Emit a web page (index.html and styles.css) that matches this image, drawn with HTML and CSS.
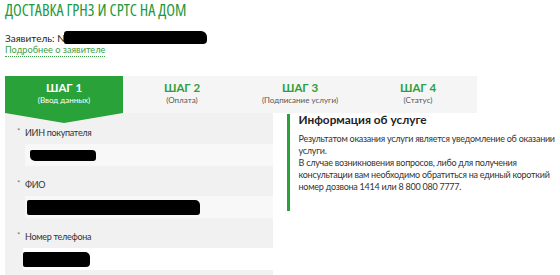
FILE: index.html
```html
<!DOCTYPE html>
<html lang="ru">
<head>
<meta charset="utf-8">
<title>Доставка ГРНЗ и СРТС на дом</title>
<link rel="stylesheet" href="styles.css">
</head>
<body>
<div class="page">
  <h1 class="title">ДОСТАВКА ГРНЗ И СРТС НА ДОМ</h1>
  <div class="applicant">Заявитель: N<span class="redact redact-name"></span></div>
  <div class="more"><a class="more-link" href="#">Подробнее о заявителе</a></div>

  <div class="steps">
    <div class="step active">
      <div class="step-title">ШАГ 1</div>
      <div class="step-sub">(Ввод данных)</div>
    </div>
    <div class="step">
      <div class="step-title">ШАГ 2</div>
      <div class="step-sub">(Оплата)</div>
    </div>
    <div class="step">
      <div class="step-title">ШАГ 3</div>
      <div class="step-sub">(Подписание услуги)</div>
    </div>
    <div class="step">
      <div class="step-title">ШАГ 4</div>
      <div class="step-sub">(Статус)</div>
    </div>
  </div>

  <div class="main">
    <div class="form">
      <div class="field">
        <div class="label"><span class="req">*</span>ИИН покупателя</div>
        <div class="input"><span class="redact redact-iin"></span></div>
      </div>
      <div class="field">
        <div class="label"><span class="req">*</span>ФИО</div>
        <div class="input"><span class="redact redact-fio"></span></div>
      </div>
      <div class="field">
        <div class="label"><span class="req">*</span>Номер телефона</div>
        <div class="input input-white"><span class="redact redact-phone"></span></div>
      </div>
    </div>
    <div class="info">
      <div class="info-title">Информация об услуге</div>
      <p class="info-text">Результатом оказания услуги является уведомление об оказании услуги.<br>В случае возникновения вопросов, либо для получения консультации вам необходимо обратиться на единый короткий номер дозвона 1414 или 8 800 080 7777.</p>
    </div>
  </div>
</div>
</body>
</html>
```

FILE: styles.css
```css
* { box-sizing: border-box; }
html, body { margin: 0; padding: 0; background: #ffffff; }
body {
  font-family: Lato, "Open Sans", sans-serif;
  color: #333333;
  overflow: hidden;
}
.page {
  padding: 0 5px;
}
.title {
  margin: 1px 0 0;
  font-family: "Open Sans", Lato, sans-serif;
  font-stretch: 75%;
  font-size: 16px;
  line-height: 18px;
  font-weight: 400;
  color: #23973a;
  letter-spacing: 0;
}
.applicant {
  margin-top: 12px;
  font-size: 10px;
  line-height: 12px;
  color: #222;
  display: flex;
  align-items: center;
}
.redact {
  display: inline-block;
  background: #000;
}
.redact-name {
  width: 143px;
  height: 13px;
  border-radius: 3px 6px 4px 2px;
  margin-left: -1px;
}
.more {
  font-size: 9.2px;
  line-height: 12px;
}
.more-link {
  display: inline-block;
  color: #3a9f46;
  text-decoration: none;
  border-bottom: 1px dotted #3a9f46;
}
.steps {
  margin-top: 19px;
  width: 472px;
  height: 37px;
  background: #f5f5f5;
  display: grid;
  grid-template-columns: repeat(4, 1fr);
}
.step {
  position: relative;
  text-align: center;
  padding-top: 5px;
}
.step-title {
  font-size: 11.5px;
  line-height: 14px;
  font-weight: 700;
  color: #2f9f3b;
}
.step-sub {
  font-size: 8px;
  line-height: 11px;
  color: #555;
}
.step.active {
  background: #2aa23a;
}
.step.active .step-title,
.step.active .step-sub {
  color: #ffffff;
}
.step.active::after {
  content: "";
  position: absolute;
  left: 0;
  top: 100%;
  border-left: 59px solid transparent;
  border-right: 59px solid transparent;
  border-top: 10px solid #2aa23a;
  z-index: 2;
}
.main {
  display: flex;
  align-items: flex-start;
}
.form {
  width: 269px;
  height: 170px;
  background: #f1f1f1;
  padding: 13px 0 0 20px;
}
.field {
  margin-bottom: 12px;
}
.label {
  position: relative;
  font-size: 9px;
  letter-spacing: -0.3px;
  line-height: 14px;
  color: #333;
  margin-bottom: 4px;
}
.req {
  position: absolute;
  left: -8px;
  top: -2px;
  font-size: 8px;
  color: #777;
}
.input {
  height: 22px;
  background: #f8f8f8;
  display: flex;
  align-items: center;
  padding-left: 5px;
}
.input-white {
  background: #ffffff;
  padding-left: 0;
  margin-left: -2px;
}
.redact-iin {
  width: 66px;
  height: 11px;
  border-radius: 2px 4px 3px 5px;
}
.redact-fio {
  width: 173px;
  height: 15px;
  margin-left: -3px;
  border-radius: 2px 5px 3px 2px;
}
.redact-phone {
  width: 67px;
  height: 15px;
  border-radius: 2px 5px 4px 2px;
}
.info {
  margin-left: 14px;
  margin-top: 1px;
  border-left: 3px solid #2aa23a;
  padding: 0 0 18px 9px;
  width: 270px;
}
.info-title {
  font-size: 11.8px;
  line-height: 12px;
  font-weight: 700;
  color: #222;
  padding-top: 0;
}
.info-text {
  margin: 7px 0 0;
  font-size: 9px;
  letter-spacing: -0.25px;
  line-height: 12px;
  color: #333;
}
```
